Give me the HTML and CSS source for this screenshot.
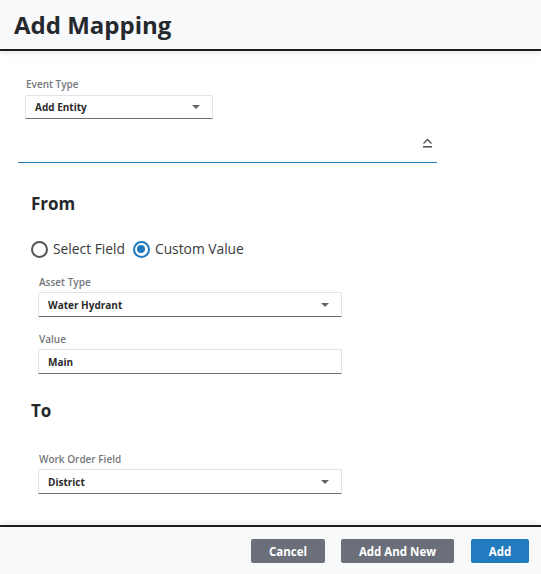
FILE: index.html
```html
<!DOCTYPE html>
<html>
<head>
<meta charset="utf-8">
<link rel="stylesheet" href="styles.css">
</head>
<body>
<div class="page">
  <header class="header">
    <h1 class="title">Add Mapping</h1>
  </header>
  <main class="main">
    <div class="field event-field">
      <label class="label">Event Type</label>
      <div class="select">
        <span class="select-text">Add Entity</span>
        <svg class="caret" width="8" height="4" viewBox="0 0 8 4"><path d="M0 0 H8 L4 4 Z" fill="#666"/></svg>
      </div>
    </div>
    <div class="collapse-bar">
      <svg class="chev" width="11" height="10" viewBox="0 0 11 10"><path d="M1.5 5.5 L5.5 1.5 L9.5 5.5" fill="none" stroke="#555" stroke-width="1.4"/><rect x="1" y="8" width="9" height="1.6" fill="#555"/></svg>
    </div>
    <section class="section">
      <h2 class="section-title">From</h2>
      <div class="radios">
        <label class="radio"><span class="circle"></span><span>Select Field</span></label>
        <label class="radio"><span class="circle checked"></span><span>Custom Value</span></label>
      </div>
      <div class="fields">
        <div class="field">
          <label class="label">Asset Type</label>
          <div class="select wide">
            <span class="select-text">Water Hydrant</span>
            <svg class="caret" width="8" height="4" viewBox="0 0 8 4"><path d="M0 0 H8 L4 4 Z" fill="#666"/></svg>
          </div>
        </div>
        <div class="field gap-top">
          <label class="label">Value</label>
          <div class="select wide input">
            <span class="select-text">Main</span>
          </div>
        </div>
      </div>
    </section>
    <section class="section to-section">
      <h2 class="section-title">To</h2>
      <div class="fields">
        <div class="field to-field">
          <label class="label">Work Order Field</label>
          <div class="select wide">
            <span class="select-text">District</span>
            <svg class="caret" width="8" height="4" viewBox="0 0 8 4"><path d="M0 0 H8 L4 4 Z" fill="#666"/></svg>
          </div>
        </div>
      </div>
    </section>
  </main>
  <footer class="footer">
    <button class="btn btn-gray btn-cancel">Cancel</button>
    <button class="btn btn-gray btn-new">Add And New</button>
    <button class="btn btn-blue btn-add">Add</button>
  </footer>
</div>
</body>
</html>
```

FILE: styles.css
```css
html, body {
  margin: 0;
  padding: 0;
  background: #ffffff;
}
body {
  font-family: "Open Sans", "Noto Sans", sans-serif;
  color: #212529;
}
.page {
  height: 100vh;
  display: flex;
  flex-direction: column;
  overflow: hidden;
}
.header {
  height: 49px;
  background: #f8f9fb;
  border-bottom: 2px solid #1e1e1e;
  box-shadow: 0 2px 6px rgba(0, 0, 0, 0.10);
  flex: none;
  position: relative;
  z-index: 1;
}
.title {
  margin: 0;
  padding-left: 14px;
  font-size: 24px;
  font-weight: 700;
  line-height: 49px;
  color: #25282c;
}
.main {
  flex: 1;
  padding-top: 26px;
}
.field {
  display: flex;
  flex-direction: column;
}
.event-field {
  margin-left: 25px;
}
.label {
  font-size: 10px;
  font-weight: 600;
  line-height: 14px;
  color: #74777c;
  margin-left: 1px;
  margin-bottom: 3px;
}
.event-field .label {
  margin-bottom: 4px;
}
.select {
  box-sizing: border-box;
  width: 188px;
  height: 24px;
  border: 1px solid #e2e3e5;
  border-bottom: 1px solid #6f6f6f;
  border-radius: 2px 2px 0 0;
  display: flex;
  align-items: center;
  justify-content: space-between;
  padding: 0 12px 0 9px;
  background: #fff;
}
.select.wide {
  width: 304px;
  height: 25px;
}
.select-text {
  font-size: 10px;
  font-weight: 700;
  color: #2b2b2b;
}
.caret {
  display: block;
}
.collapse-bar {
  box-sizing: border-box;
  margin-left: 18px;
  width: 419px;
  height: 44px;
  border-bottom: 1px solid #2a7ab8;
  display: flex;
  justify-content: flex-end;
  align-items: flex-start;
  padding: 19px 4px 0 0;
}
.chev {
  display: block;
}
.section {
  margin-left: 31px;
  margin-top: 29px;
}
.section-title {
  margin: 0;
  font-size: 17px;
  font-weight: 700;
  line-height: 24px;
  color: #25282c;
}
.radios {
  display: flex;
  gap: 8px;
  margin-top: 23px;
  height: 20px;
  align-items: center;
}
.radio {
  display: flex;
  align-items: center;
  gap: 5px;
  font-size: 13.8px;
  color: #3a3a3a;
  line-height: 20px;
}
.circle {
  box-sizing: border-box;
  width: 17px;
  height: 17px;
  border-radius: 50%;
  border: 2px solid #555;
  background: #fff;
  position: relative;
}
.circle.checked {
  border-color: #1f7bbf;
}
.circle.checked::after {
  content: "";
  position: absolute;
  left: 2.5px;
  top: 2.5px;
  width: 8px;
  height: 8px;
  border-radius: 50%;
  background: #1f7bbf;
}
.fields {
  margin-left: 7px;
  margin-top: 16px;
}
.gap-top {
  margin-top: 15px;
}
.to-section {
  margin-top: 25px;
}
.to-field {
  margin-top: 29px;
}
.to-section .fields {
  margin-top: 0;
}
.footer {
  flex: none;
  background: #f8f9fb;
  border-top: 2px solid #1e1e1e;
  box-shadow: 0 -2px 6px rgba(0, 0, 0, 0.08);
  display: flex;
  justify-content: flex-end;
  align-items: flex-start;
  padding: 12px 12px 0 0;
  box-sizing: border-box;
  height: 49px;
  gap: 16px;
}
.btn {
  height: 24px;
  border: none;
  border-radius: 2px;
  color: #fff;
  font-family: "Open Sans", "Noto Sans", sans-serif;
  font-size: 11.5px;
  font-weight: 700;
  padding: 0;
  cursor: pointer;
}
.btn-gray {
  background: #6b6f7a;
}
.btn-blue {
  background: #217bbe;
}
.btn-cancel {
  width: 74px;
}
.btn-new {
  width: 113px;
}
.btn-add {
  width: 58px;
  margin-left: 1px;
}
```
